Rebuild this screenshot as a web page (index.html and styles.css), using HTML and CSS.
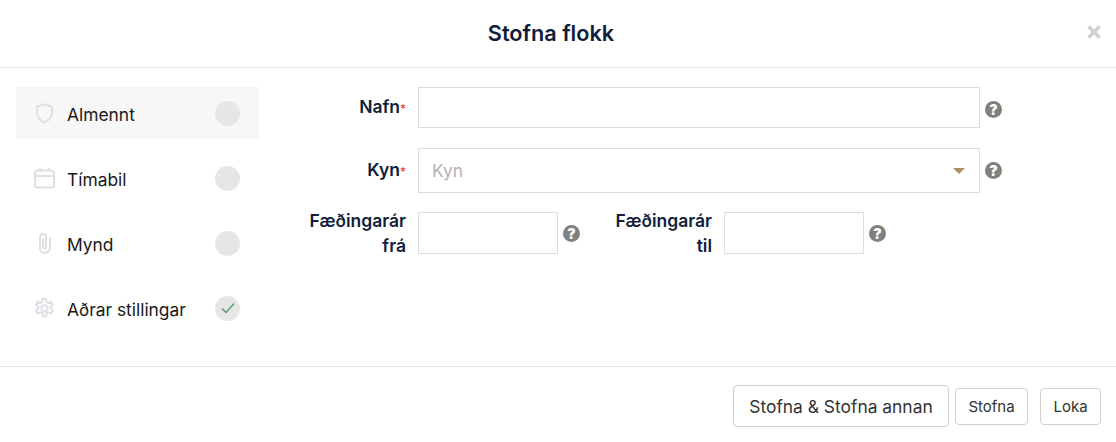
FILE: index.html
```html
<!DOCTYPE html>
<html lang="is">
<head>
    <meta charset="UTF-8">
    <meta name="viewport" content="width=device-width, initial-scale=1.0">
    <title>Stofna flokk</title>
    <link rel="stylesheet" href="styles.css">
</head>
<body>
    <div class="modal">
        <header class="modal-header">
            <h1 class="modal-title">Stofna flokk</h1>
            <button class="close" aria-label="Loka">
                <svg viewBox="0 0 14 14" width="14" height="14"><path d="M1.500 1.500l11 11M12.500 1.500l-11 11" stroke="currentColor" stroke-width="3.400" fill="none"/></svg>
            </button>
        </header>

        <div class="modal-body">
            <nav class="steps">
                <div class="step active">
                    <svg class="step-icon" viewBox="0 0 21 21"><path d="M10.500 1.200l7.500 2.600v6c0 4.500-3 7.600-7.500 9.800C6 17.400 3 14.300 3 9.800v-6z"/></svg>
                    <span class="step-label">Almennt</span>
                    <span class="step-state"></span>
                </div>
                <div class="step">
                    <svg class="step-icon" viewBox="0 0 21 21"><rect x="1" y="2.500" width="19" height="17" rx="2.500"/><path d="M1 8h19M6 0v3.500M15 0v3.500"/></svg>
                    <span class="step-label">Tímabil</span>
                    <span class="step-state"></span>
                </div>
                <div class="step">
                    <svg class="step-icon" viewBox="0 0 21 21"><path d="M9 5.500v8c0 1.300.6 2 1.500 2s1.500-.7 1.500-2v-9.500C12 2 11 1 9.500 1S6.500 2 6 3.500V15c0 3 2 5 4.500 5S16 18 16 15V4.500"/></svg>
                    <span class="step-label">Mynd</span>
                    <span class="step-state"></span>
                </div>
                <div class="step">
                    <svg class="step-icon" viewBox="0 0 21 21"><circle cx="10.500" cy="10.500" r="3.200"/><path d="M8.800 1h3.400l.5 2.800 1.800 1 2.700-1 1.700 3-2.200 1.800v2l2.200 1.800-1.700 3-2.700-1-1.800 1-.5 2.800H8.800l-.5-2.800-1.800-1-2.700 1-1.700-3 2.200-1.800v-2L2.100 6.800l1.700-3 2.700 1 1.800-1z"/></svg>
                    <span class="step-label">Aðrar stillingar</span>
                    <span class="step-state">
                        <svg viewBox="0 0 14 14" width="14" height="14"><path d="M1 7.500l4 4 8-9" stroke="#4f9a6e" stroke-width="1.300" fill="none"/></svg>
                    </span>
                </div>
            </nav>

            <form class="form">
                <div class="form-row">
                    <label class="form-label">Nafn<span class="req">*</span></label>
                    <input class="input" type="text">
                    <span class="help help-low">?</span>
                </div>
                <div class="form-row row-select">
                    <label class="form-label">Kyn<span class="req">*</span></label>
                    <div class="input select">
                        <span class="placeholder">Kyn</span>
                        <span class="caret"></span>
                    </div>
                    <span class="help">?</span>
                </div>
                <div class="form-row row-years">
                    <label class="form-label">Fæðingarár frá</label>
                    <input class="input small" type="text">
                    <span class="help">?</span>
                    <label class="form-label label-second">Fæðingarár til</label>
                    <input class="input small" type="text">
                    <span class="help">?</span>
                </div>
            </form>
        </div>

        <footer class="modal-footer">
            <button class="btn btn-lg">Stofna &amp; Stofna annan</button>
            <button class="btn">Stofna</button>
            <button class="btn btn-close">Loka</button>
        </footer>
    </div>
</body>
</html>
```

FILE: styles.css
```css
* {
    margin: 0;
    padding: 0;
    box-sizing: border-box;
}

body {
    font-family: Inter, 'Noto Sans', sans-serif;
    background: white;
    color: #1a1a1a;
}

.modal {
    width: 1116px;
    height: 442px;
    display: flex;
    flex-direction: column;
}

.modal-header {
    position: relative;
    height: 68px;
    border-bottom: 1px solid #e6e6e6;
    display: flex;
    align-items: center;
    justify-content: center;
    padding-right: 14px;
    padding-bottom: 2px;
}

.modal-title {
    font-size: 21.700px;
    font-weight: 600;
    color: #101d3b;
}

.close {
    position: absolute;
    top: 25px;
    right: 15px;
    border: 0;
    background: none;
    color: #cfcfcf;
    width: 14px;
    height: 14px;
}

.modal-body {
    height: 299px;
    display: flex;
    border-bottom: 1px solid #e6e6e6;
    padding: 19px 0 0 16px;
}

.steps {
    width: 243px;
    display: flex;
    flex-direction: column;
    gap: 13px;
}

.step {
    height: 52px;
    display: flex;
    align-items: center;
    padding-left: 18px;
    padding-right: 19px;
}

.step.active {
    background: #f7f7f7;
}

.step-icon {
    width: 21px;
    height: 21px;
    fill: none;
    stroke: #dfe0e6;
    stroke-width: 2;
    margin-right: 12px;
    flex-shrink: 0;
}

.step-label {
    flex: 1;
    font-size: 17.400px;
    color: #1a1a1a;
    margin-top: 3px;
}

.step-state {
    width: 25px;
    height: 25px;
    border-radius: 50%;
    background: #e6e6e6;
    display: flex;
    align-items: center;
    justify-content: center;
}

.form {
    flex: 1;
}

.form-row {
    display: flex;
    align-items: center;
    height: 41px;
    margin-bottom: 20px;
    padding-left: 40px;
}

.row-select {
    height: 45px;
    margin-bottom: 19px;
}

.row-years {
    height: 42px;
    margin-bottom: 0;
}

.form-label {
    width: 107px;
    margin-right: 12px;
    text-align: right;
    font-size: 17.500px;
    font-weight: 600;
    line-height: 25px;
    color: #101d3b;
    flex-shrink: 0;
}

.label-second {
    margin-left: 25px;
}

.req {
    color: #f0323c;
    font-size: 12px;
    font-weight: 400;
}

.input {
    width: 562px;
    height: 100%;
    border: 1px solid #dcdcdc;
    background: white;
}

.input.small {
    width: 140px;
}

.select {
    display: flex;
    align-items: center;
    justify-content: space-between;
    padding: 0 14px 0 13px;
}

.placeholder {
    font-size: 17.400px;
    color: #b3b3b3;
}

.caret {
    width: 0;
    height: 0;
    border-left: 6px solid transparent;
    border-right: 6px solid transparent;
    border-top: 6px solid #a98f62;
}

.help {
    width: 17px;
    height: 17px;
    margin-left: 5px;
    border-radius: 50%;
    background: #808080;
    color: white;
    font-size: 14px;
    font-weight: 900;
    line-height: 17px;
    text-align: center;
    flex-shrink: 0;
}

.help-low {
    margin-top: 3px;
}

.modal-footer {
    flex: 1;
    display: flex;
    justify-content: flex-end;
    align-items: center;
    padding: 3px 15px 0 0;
    gap: 6px;
}

.btn {
    height: 37px;
    width: 73px;
    border: 1px solid #cfcfcf;
    border-radius: 4px;
    background: white;
    font-family: Inter, 'Noto Sans', sans-serif;
    font-size: 15px;
    color: #333;
}

.btn-lg {
    height: 42px;
    width: 216px;
    font-size: 17.400px;
}

.btn-close {
    width: 61px;
    margin-left: 6px;
}
```
